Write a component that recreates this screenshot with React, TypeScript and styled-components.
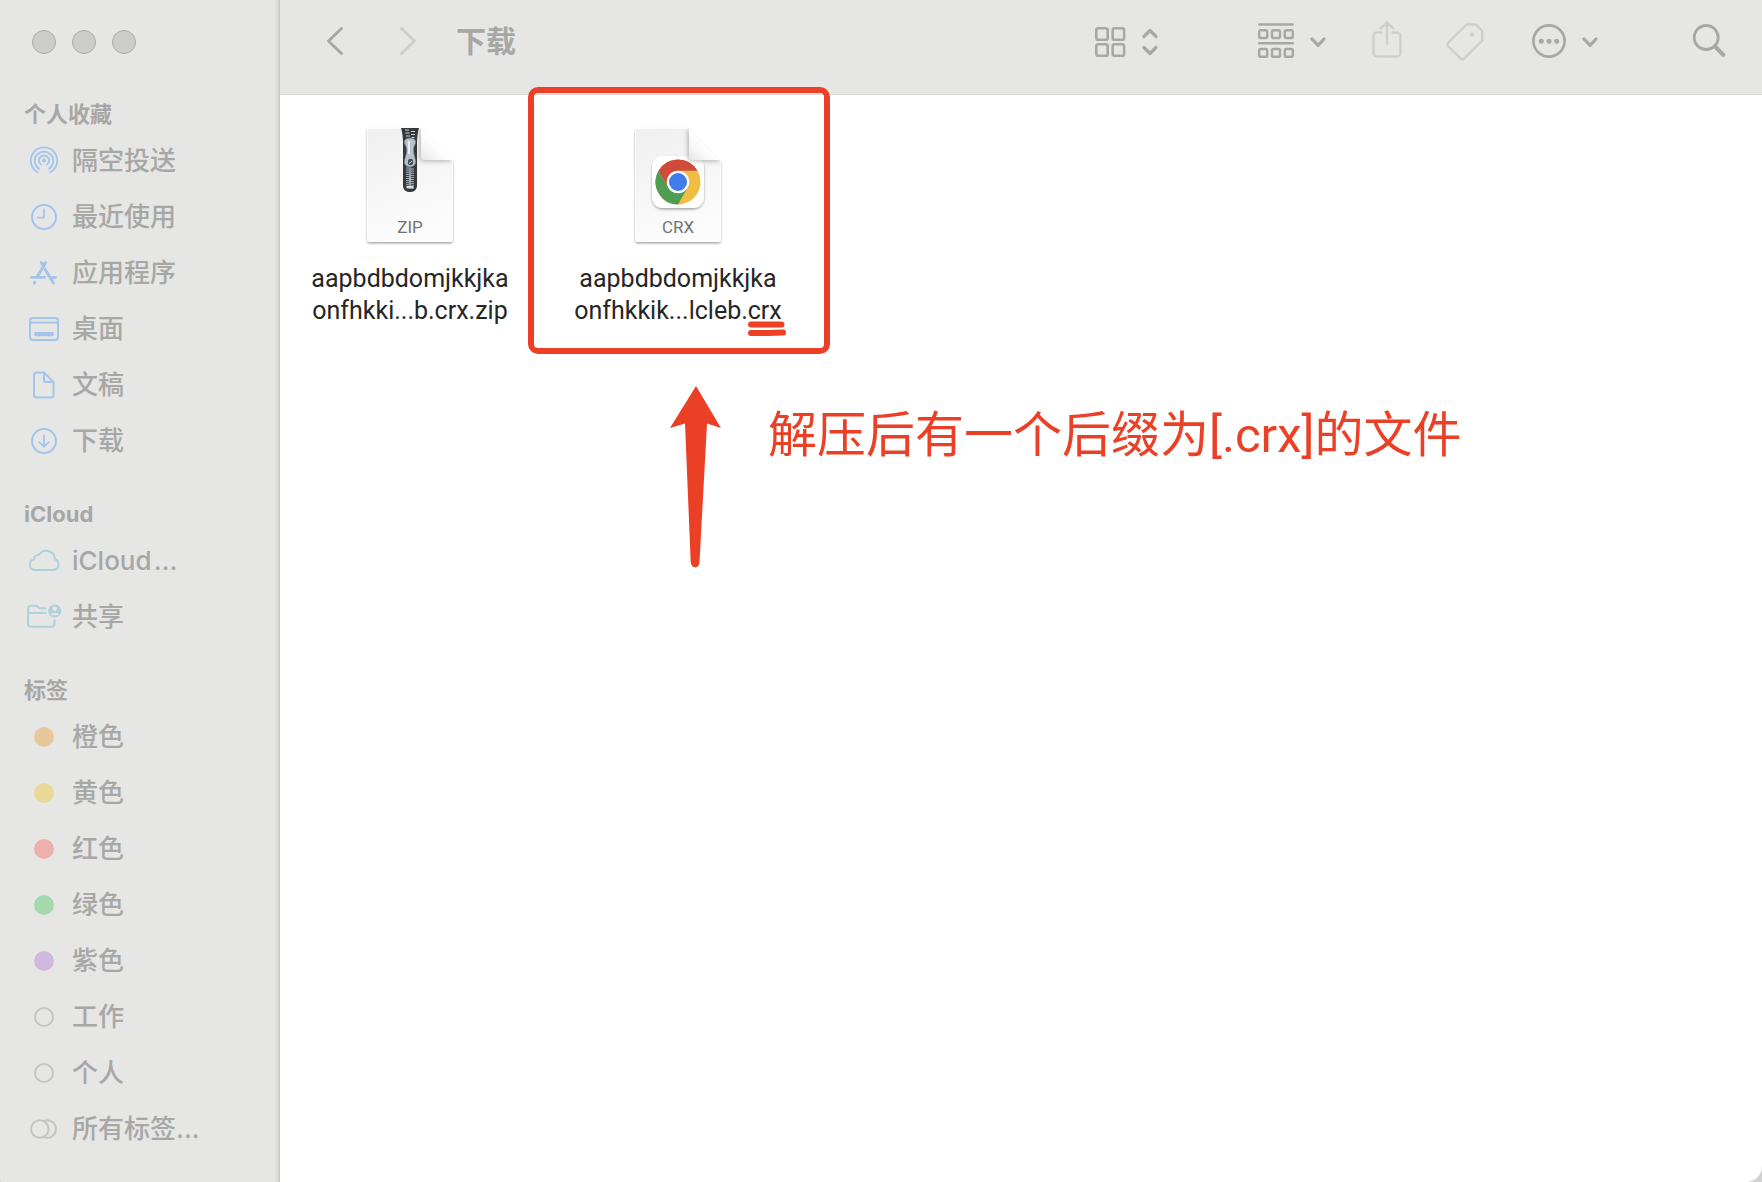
import React from "react";
import styled, { createGlobalStyle } from "styled-components";

const red = "#eb4026";
const ink = "#a7a7a5";
const faint = "#cececc";
const blue = "#a3c4ec";
const teal = "#aed2d8";
const chrome = "#e6e6e4";

const GlobalStyle = createGlobalStyle`
  *, *::before, *::after { box-sizing: border-box; }
  body {
    margin: 0;
    background: #d2d2d2;
    font-family: Inter, "Noto Sans CJK SC", "Noto Sans", sans-serif;
  }
  h1, h2, p, ul { margin: 0; padding: 0; }
  ul { list-style: none; }
`;

const Window = styled.div`
  display: flex;
  min-height: 100vh;
  background: #fff;
  border-radius: 0 0 16px 4px;
  overflow: hidden;
`;

/* ---------- Sidebar ---------- */

const Sidebar = styled.nav`
  flex: 0 0 280px;
  padding-bottom: 24px;
  color: ${ink};
  background: linear-gradient(to left, #c8c8c8 0, #c8c8c8 1px, #dcdcda 2px, ${chrome} 6px);
`;

const TrafficLights = styled.div`
  display: flex;
  gap: 16px;
  height: 95px;
  padding: 30px 32px;
`;

const Light = styled.button`
  width: 24px;
  height: 24px;
  padding: 0;
  border: 1px solid #ababa9;
  border-radius: 50%;
  background: #cdcdcb;
`;

const Section = styled.section`
  & + & {
    margin-top: 26px;
  }
`;

const SectionTitle = styled.h2`
  padding-left: 24px;
  font-size: 22px;
  font-weight: 700;
  line-height: 38px;
`;

const Item = styled.a`
  display: flex;
  align-items: center;
  gap: 8px;
  height: 56px;
  padding-left: 24px;
  color: inherit;
  font-size: 26px;
  font-weight: 500;
  line-height: 56px;
  text-decoration: none;
  white-space: nowrap;
`;

const IconSlot = styled.span`
  display: flex;
  flex: 0 0 40px;
  justify-content: center;
`;

const Dot = styled.span<{ $fill?: string }>`
  width: 20px;
  height: 20px;
  border: 2px solid ${(p) => p.$fill ?? "#c4c4c2"};
  border-radius: 50%;
  background: ${(p) => p.$fill ?? "transparent"};
`;

const SideSvg = ({ color, children }: { color: string; children: React.ReactNode }) => (
  <svg width="36" height="36" viewBox="0 0 36 36" fill="none" stroke={color} strokeWidth="2"
    strokeLinecap="round" strokeLinejoin="round" aria-hidden="true">
    {children}
  </svg>
);

const AirDropIcon = () => (
  <SideSvg color={blue}>
    <circle cx="18" cy="17.500" r="2" fill={blue} stroke="none" />
    <path d="M15 21.500A5 5 0 1 1 21 21.500M13 25.700A9.300 9.300 0 1 1 23 25.700M11.600 29.100A13.200 13.200 0 1 1 24.400 29.100" strokeWidth="1.800" />
  </SideSvg>
);
const ClockIcon = () => (
  <SideSvg color={blue}>
    <circle cx="18" cy="18" r="12" />
    <path d="M18 10V18.600H11.400" strokeWidth="1.700" />
  </SideSvg>
);
const AppsIcon = () => (
  <SideSvg color={blue}>
    <path d="M5.500 22.400H18.800M26 22.400H29.500" strokeWidth="2.800" />
    <path d="M15.300 7.500L17.400 10.800M19.800 7.500L11.400 21.600M8.800 27.200L8.300 28M19.200 14.500L27.400 28" strokeWidth="3" />
  </SideSvg>
);
const DesktopIcon = () => (
  <SideSvg color={blue}>
    <rect x="4" y="7" width="28" height="22" rx="3" />
    <path d="M4 11.500H32" />
    <rect x="8.300" y="21" width="19.400" height="4.200" rx="1" fill={blue} stroke="none" />
  </SideSvg>
);
const DocumentIcon = () => (
  <SideSvg color={blue}>
    <path d="M18 5.500H10.500A2.500 2.500 0 0 0 8 8V28A2.500 2.500 0 0 0 10.500 30.500H25A2.500 2.500 0 0 0 27.500 28V15ZM18 5.500V13.500A1.500 1.500 0 0 0 19.500 15H27.500" />
  </SideSvg>
);
const DownloadIcon = () => (
  <SideSvg color={blue}>
    <circle cx="18" cy="18" r="12" />
    <path d="M18 12.300V23.500M13.400 19.300L18 23.700L22.600 19.300" strokeWidth="1.800" />
  </SideSvg>
);
const CloudIcon = () => (
  <SideSvg color={teal}>
    <path d="M8.500 27H27.500A5.600 5.600 0 0 0 29 16.200A8.700 8.700 0 0 0 13.200 11.500A5 5 0 0 0 8 16.200A5.500 5.500 0 0 0 8.500 27Z" />
  </SideSvg>
);
const SharedIcon = () => (
  <SideSvg color={teal}>
    <path d="M20.500 9.300H13.500L11.500 7.500A3 3 0 0 0 9.500 6.700H5A3 3 0 0 0 2 9.700V24.700A3 3 0 0 0 5 27.700H25.500A3 3 0 0 0 28.500 24.700V20.500M2 14H20.500" strokeLinecap="butt" />
    <circle cx="28.700" cy="12" r="6.500" fill={teal} stroke="none" />
    <circle cx="28.700" cy="9.800" r="2.200" fill={chrome} stroke="none" />
    <path d="M24.800 16.200C25.500 13 31.900 13 32.600 16.200Z" fill={chrome} stroke="none" />
  </SideSvg>
);
const AllTagsIcon = () => (
  <SideSvg color="#c4c4c2">
    <circle cx="13.800" cy="18" r="8.800" />
    <path d="M18.500 9.600A8.800 8.800 0 1 1 18.500 26.400" />
  </SideSvg>
);

type Entry = { label: string; icon: React.ReactNode };
const sections: { title: string; items: Entry[] }[] = [
  {
    title: "个人收藏",
    items: [
      { label: "隔空投送", icon: <AirDropIcon /> },
      { label: "最近使用", icon: <ClockIcon /> },
      { label: "应用程序", icon: <AppsIcon /> },
      { label: "桌面", icon: <DesktopIcon /> },
      { label: "文稿", icon: <DocumentIcon /> },
      { label: "下载", icon: <DownloadIcon /> },
    ],
  },
  {
    title: "iCloud",
    items: [
      { label: "iCloud\u200a…", icon: <CloudIcon /> },
      { label: "共享", icon: <SharedIcon /> },
    ],
  },
  {
    title: "标签",
    items: [
      { label: "橙色", icon: <Dot $fill="#e8c79b" /> },
      { label: "黄色", icon: <Dot $fill="#e8d998" /> },
      { label: "红色", icon: <Dot $fill="#eeb0ad" /> },
      { label: "绿色", icon: <Dot $fill="#a6d9ae" /> },
      { label: "紫色", icon: <Dot $fill="#d0b8de" /> },
      { label: "工作", icon: <Dot /> },
      { label: "个人", icon: <Dot /> },
      { label: "所有标签...", icon: <AllTagsIcon /> },
    ],
  },
];

/* ---------- Toolbar ---------- */

const Main = styled.main`
  display: flex;
  flex: 1;
  flex-direction: column;
  min-width: 0;
`;

const Toolbar = styled.header`
  display: flex;
  align-items: center;
  height: 95px;
  padding: 0 36px 12px 46px;
  border-bottom: 1px solid #d8d8d6;
  background: ${chrome};
  color: ${ink};
`;

const ToolButton = styled.button<{ $before?: number }>`
  display: flex;
  flex: none;
  gap: 16px;
  margin: 0 0 0 ${(p) => p.$before ?? 0}px;
  padding: 0;
  border: 0;
  background: none;
  color: inherit;
  &:disabled {
    color: ${faint};
  }
`;

const Title = styled.h1`
  flex: 1;
  margin-left: 38px;
  font-size: 30px;
  font-weight: 700;
  line-height: 40px;
`;

const ToolSvg = ({ w, sw = 2.6, children }: { w: number; sw?: number; children: React.ReactNode }) => (
  <svg width={w} height="40" viewBox={`0 0 ${w} 40`} fill="none" stroke="currentColor" strokeWidth={sw}
    strokeLinecap="round" strokeLinejoin="round" aria-hidden="true">
    {children}
  </svg>
);

const Caret = () => (
  <ToolSvg w={16} sw={3.2}>
    <path d="M2 18L8 24.300L14 18" />
  </ToolSvg>
);

/* ---------- Files ---------- */

const Files = styled.ul`
  display: flex;
  gap: 8px;
  padding-top: 26px;
`;

const File = styled.li`
  position: relative;
  display: flex;
  flex: 0 0 260px;
  flex-direction: column;
  align-items: center;
`;

const FileName = styled.p`
  margin-top: 18px;
  color: #262626;
  font-family: Roboto, Inter, sans-serif;
  font-size: 25px;
  line-height: 32px;
  text-align: center;
  white-space: nowrap;
`;

const Highlight = styled.span`
  position: absolute;
  inset: -34px -22px -27px -20px;
  border: 6px solid ${red};
  border-radius: 10px;
`;

const Marked = styled.span`
  position: relative;
`;

const Underline = styled.svg`
  position: absolute;
  top: 100%;
  left: 0;
  margin-top: -4px;
`;

const Callout = styled.div`
  display: flex;
  gap: 46px;
  padding: 59px 16px 0 390px;
`;

const Note = styled.p`
  padding-top: 14px;
  color: ${red};
  font-family: Roboto, "Noto Sans CJK SC", sans-serif;
  font-size: 49px;
  font-weight: 400;
  line-height: 72px;
`;

const Page = ({ id, label, children }: { id: string; label: string; children: React.ReactNode }) => (
  <svg width="96" height="124" viewBox="0 0 96 124" role="img" aria-label={label}>
    <defs>
      <linearGradient id={`${id}-paper`} x1="0" y1="0" x2="0.300" y2="1">
        <stop offset="0" stopColor="#efefef" />
        <stop offset="1" stopColor="#fcfcfc" />
      </linearGradient>
      <linearGradient id={`${id}-fold`} gradientUnits="userSpaceOnUse" x1="60" y1="40" x2="75" y2="24">
        <stop offset="0" stopColor="#e4e4e4" />
        <stop offset="0.500" stopColor="#f5f5f5" />
        <stop offset="1" stopColor="#ffffff" />
      </linearGradient>
      <filter id={`${id}-shadow`} x="-20%" y="-20%" width="140%" height="150%">
        <feDropShadow dx="0" dy="1.500" stdDeviation="1" floodColor="#000" floodOpacity="0.350" />
      </filter>
      <filter id={`${id}-soft`} x="-40%" y="-40%" width="180%" height="180%">
        <feGaussianBlur stdDeviation="2.500" />
      </filter>
      <clipPath id={`${id}-clip`}>
        <path d="M8 7H58L91 40V118A3 3 0 0 1 88 121H8A3 3 0 0 1 5 118V10A3 3 0 0 1 8 7Z" />
      </clipPath>
    </defs>
    <path d="M8 7H58L91 40V118A3 3 0 0 1 88 121H8A3 3 0 0 1 5 118V10A3 3 0 0 1 8 7Z"
      fill={`url(#${id}-paper)`} filter={`url(#${id}-shadow)`} />
    <path d="M8 7.500H58L90.500 40V117.500A3 3 0 0 1 87.500 120.500H8.500A3 3 0 0 1 5.500 117.500V10A2.500 2.500 0 0 1 8 7.500Z"
      fill="none" stroke="#fff" strokeOpacity="0.800" />
    {children}
    <g clipPath={`url(#${id}-clip)`}>
      <path d="M58 7V37A3 3 0 0 0 61 40H91Z" fill="#000" fillOpacity="0.300" filter={`url(#${id}-soft)`} />
    </g>
    <path d="M59 7.500V36A3 3 0 0 0 62 39H90.500Z" fill={`url(#${id}-fold)`} />
    <text x="48" y="112" textAnchor="middle" fontFamily="Roboto, sans-serif" fontSize="17" fill="#737373">
      {label}
    </text>
  </svg>
);

const teeth = Array.from({ length: 10 }, (_, i) => 47 + i * 2.1);

const Zipper = () => (
  <g>
    <path d="M39 7H57C55.500 12 55 17 55 22V65A6 6 0 0 1 49 71H47A6 6 0 0 1 41 65V22C41 17 40.500 12 39 7Z" fill="#36393c" />
    <path d="M43 9H47M49 10.500H53M43.500 12H47.500M49 13.500H53M44 15H48M49.500 16.500H52.500" stroke="#c9d0d4" strokeWidth="1.200" />
    {teeth.map((y) => (
      <path key={y} d={`M44 ${y}H49M47 ${y + 1}H52`} stroke="#bcc5ca" strokeWidth="0.900" fill="none" />
    ))}
    <rect x="44.500" y="65" width="7" height="2.500" rx="1" fill="#d3d9dc" />
    <path d="M42.500 20.500C42.500 16 53.500 16 53.500 20.500C53.500 24 51.500 25 51.500 29C51.500 34 53.500 37 53.500 41C53.500 47.500 42.500 47.500 42.500 41C42.500 37 44.800 34 44.800 29C44.800 25 42.500 24 42.500 20.500Z"
      fill="#b8c4cb" stroke="#7d888f" strokeWidth="0.700" />
    <path d="M47 20V33" stroke="#e8edf0" strokeWidth="2" />
    <ellipse cx="48.500" cy="41" rx="2.700" ry="3.200" fill="#4a4f53" />
    <path d="M47 42.500L50 40" stroke="#c9d0d4" />
  </g>
);

const ChromeBadge = () => (
  <g>
    <rect x="22" y="35" width="52" height="52" rx="11" fill="#fff" filter="url(#crx-shadow)" />
    <g transform="translate(0 -1)">
      <circle cx="48" cy="62" r="22.500" fill="#f0bd44" />
      <path d="M28.510 50.750A22.500 22.500 0 0 1 67.490 50.750H48L38.260 67.620Z" fill="#d14b3c" />
      <path d="M28.510 50.750A22.500 22.500 0 0 0 48 84.500L57.740 67.620H38.260Z" fill="#4f9c53" />
      <circle cx="48" cy="62" r="11.250" fill="#fff" />
      <circle cx="48" cy="62" r="9" fill="#3f7de8" />
    </g>
  </g>
);

export default function App() {
  return (
    <>
      <GlobalStyle />
      <Window>
        <Sidebar>
          <TrafficLights>
            <Light aria-label="关闭" />
            <Light aria-label="最小化" />
            <Light aria-label="缩放" />
          </TrafficLights>
          {sections.map((section) => (
            <Section key={section.title}>
              <SectionTitle>{section.title}</SectionTitle>
              {section.items.map((item) => (
                <Item href="#" key={item.label}>
                  <IconSlot>{item.icon}</IconSlot>
                  {item.label}
                </Item>
              ))}
            </Section>
          ))}
        </Sidebar>
        <Main>
          <Toolbar>
            <ToolButton aria-label="后退">
              <ToolSvg w={20} sw={3}><path d="M15.500 7.500L2.500 20L15.500 32.500" /></ToolSvg>
            </ToolButton>
            <ToolButton aria-label="前进" $before={52} disabled>
              <ToolSvg w={20} sw={3}><path d="M3.500 7.500L16.500 20L3.500 32.500" /></ToolSvg>
            </ToolButton>
            <Title>下载</Title>
            <ToolButton aria-label="图标视图">
              <ToolSvg w={32}>
                <rect x="2.300" y="7.300" width="11.400" height="11.400" rx="1.800" />
                <rect x="18.700" y="7.300" width="11.400" height="11.400" rx="1.800" />
                <rect x="2.300" y="23.300" width="11.400" height="11.400" rx="1.800" />
                <rect x="18.700" y="23.300" width="11.400" height="11.400" rx="1.800" />
              </ToolSvg>
              <ToolSvg w={16} sw={3.2}><path d="M2 15.500L8 9.500L14 15.500M2 26.500L8 32.500L14 26.500" /></ToolSvg>
            </ToolButton>
            <ToolButton aria-label="分组" $before={100}>
              <ToolSvg w={36} sw={2.4}>
                <path d="M1.200 3.500H34.800M1.200 22.300H34.800" />
                {[1.2, 14, 26.8].map((x) => (
                  <React.Fragment key={x}>
                    <rect x={x} y="9.200" width="8" height="7.800" rx="1.600" />
                    <rect x={x} y="28" width="8" height="7.800" rx="1.600" />
                  </React.Fragment>
                ))}
              </ToolSvg>
              <Caret />
            </ToolButton>
            <ToolButton aria-label="共享" $before={46} disabled>
              <ToolSvg w={30} sw={2.4}>
                <path d="M9.500 11.500H5A3.500 3.500 0 0 0 1.500 15V32A3.500 3.500 0 0 0 5 35.500H25A3.500 3.500 0 0 0 28.500 32V15A3.500 3.500 0 0 0 25 11.500H20.500M15 22.500V2M8.500 7.500L15 1.500L21.500 7.500" />
              </ToolSvg>
            </ToolButton>
            <ToolButton aria-label="标签" $before={44} disabled>
              <ToolSvg w={38} sw={2.4}>
                <path d="M20.500 3.500H30L36.300 10V19.500L18.500 37.200A3 3 0 0 1 14.300 37.200L2.300 25.500A2.500 2.500 0 0 1 2.300 21.700Z" />
                <circle cx="26" cy="13.500" r="2.300" fill="currentColor" stroke="none" />
              </ToolSvg>
            </ToolButton>
            <ToolButton aria-label="更多" $before={48}>
              <ToolSvg w={34}>
                <circle cx="17" cy="20" r="15.600" />
                <g fill="currentColor" stroke="none">
                  <circle cx="9.300" cy="20.300" r="2.500" />
                  <circle cx="17" cy="20.300" r="2.500" />
                  <circle cx="24.700" cy="20.300" r="2.500" />
                </g>
              </ToolSvg>
              <Caret />
            </ToolButton>
            <ToolButton aria-label="搜索" $before={94}>
              <ToolSvg w={34} sw={2.8}>
                <circle cx="14.200" cy="16.500" r="12" />
                <path d="M23 25.500L31.300 33.800" strokeWidth="4" />
              </ToolSvg>
            </ToolButton>
          </Toolbar>
          <Files>
            <File>
              <Page id="zip" label="ZIP"><Zipper /></Page>
              <FileName>aapbdbdomjkkjka<br />onfhkki...b.crx.zip</FileName>
            </File>
            <File>
              <Page id="crx" label="CRX"><ChromeBadge /></Page>
              <FileName>
                aapbdbdomjkkjka<br />onfhkkik...lcleb.
                <Marked>
                  crx
                  <Underline width="38" height="16" viewBox="0 0 38 16" stroke={red} strokeWidth="6" strokeLinecap="round" aria-hidden="true">
                    <path d="M3 3.500H33.500M3 12H20L35 11.500" fill="none" />
                  </Underline>
                </Marked>
              </FileName>
              <Highlight />
            </File>
          </Files>
          <Callout>
            <svg width="52" height="182" viewBox="0 0 52 182" fill={red} aria-hidden="true">
              <path d="M26 0L51 42L37 37.500L29.500 176C29.500 183 21 183 20.700 176L15 37.500L0 42Z" />
            </svg>
            <Note>解压后有一个后缀为[.crx]的文件</Note>
          </Callout>
        </Main>
      </Window>
    </>
  );
}
